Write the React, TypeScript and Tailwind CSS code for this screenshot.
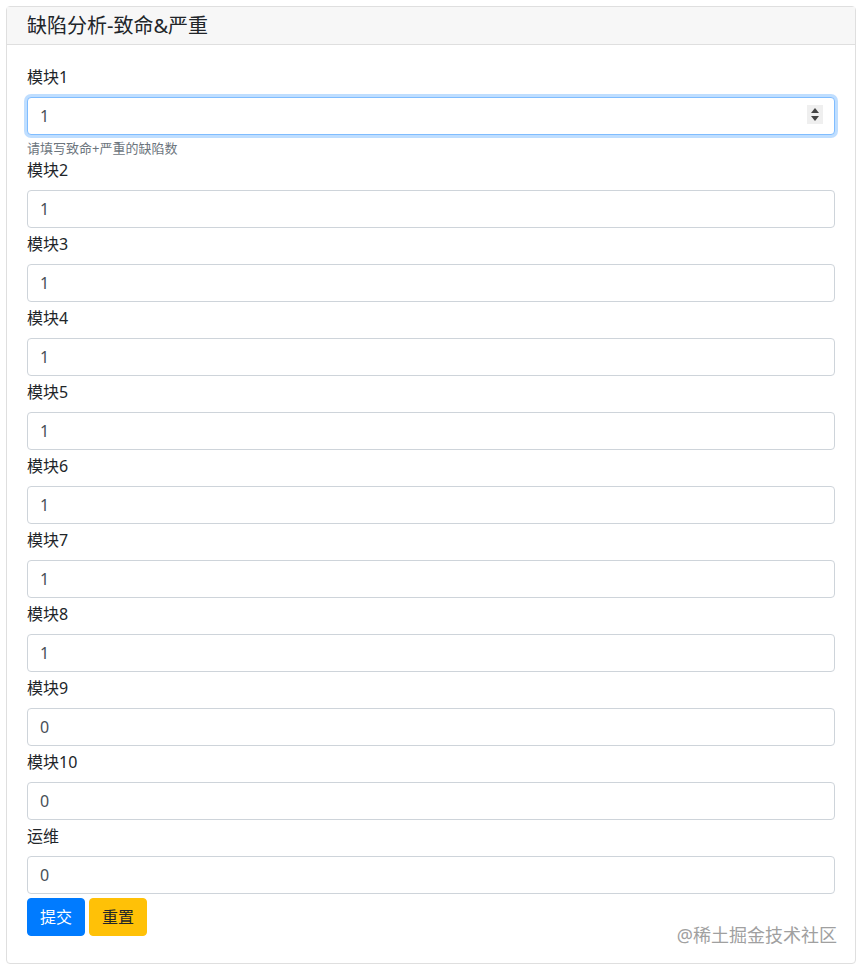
import React from "react";

const fields = [
  { label: "模块1", value: "1", help: "请填写致命+严重的缺陷数", focused: true },
  { label: "模块2", value: "1" },
  { label: "模块3", value: "1" },
  { label: "模块4", value: "1" },
  { label: "模块5", value: "1" },
  { label: "模块6", value: "1" },
  { label: "模块7", value: "1" },
  { label: "模块8", value: "1" },
  { label: "模块9", value: "0" },
  { label: "模块10", value: "0" },
  { label: "运维", value: "0" },
];

function Spinner() {
  return (
    <div className="absolute right-[12px] top-[8px] flex h-[19px] w-[16px] flex-col items-center justify-center gap-[3px] bg-[#efefef]">
      <svg width="8" height="5" viewBox="0 0 8 5">
        <path d="M4 0 L8 5 L0 5 Z" fill="#444" />
      </svg>
      <svg width="8" height="5" viewBox="0 0 8 5">
        <path d="M0 0 L8 0 L4 5 Z" fill="#444" />
      </svg>
    </div>
  );
}

export default function App() {
  return (
    <div
      className="min-h-[971px] bg-white pt-[6px] text-[#212529]"
      style={{ fontFamily: '"Noto Sans", "Noto Sans CJK SC", sans-serif' }}
    >
      <div className="relative ml-[6px] w-[850px] rounded border border-[#dfdfdf]">
        <div className="border-b border-[#dfdfdf] bg-[#f7f7f7] px-5 pt-[7px] pb-[6px]">
          <h5 className="text-[20px] leading-6">缺陷分析-致命&amp;严重</h5>
        </div>
        <div className="px-5 pt-5 pb-[27px]">
          {fields.map((f) => (
            <div key={f.label}>
              <label className="mb-2 block text-[16px] leading-6">{f.label}</label>
              <div className="relative">
                <input
                  readOnly
                  value={f.value}
                  className={
                    f.focused
                      ? "block h-[38px] w-full rounded border border-[#80bdff] bg-white px-3 text-[16px] text-[#495057] shadow-[0_0_0_3px_rgba(0,123,255,0.25)] outline-none"
                      : "block h-[38px] w-full rounded border border-[#ced4da] bg-white px-3 text-[16px] text-[#495057] outline-none"
                  }
                />
                {f.focused && <Spinner />}
              </div>
              <small className="mt-1 block text-[13px] leading-[19.2px] text-[#6c757d]">
                {f.help}
              </small>
            </div>
          ))}
          <div className="flex gap-1">
            <button className="h-[38px] rounded border border-[#007bff] bg-[#007bff] px-3 text-[16px] text-white">
              提交
            </button>
            <button className="h-[38px] rounded border border-[#ffc107] bg-[#ffc107] px-3 text-[16px] text-[#212529]">
              重置
            </button>
          </div>
        </div>
        <div className="absolute right-[18px] bottom-[16px] text-[18px] leading-6 text-[#a0a0a0]">
          @稀土掘金技术社区
        </div>
      </div>
    </div>
  );
}
